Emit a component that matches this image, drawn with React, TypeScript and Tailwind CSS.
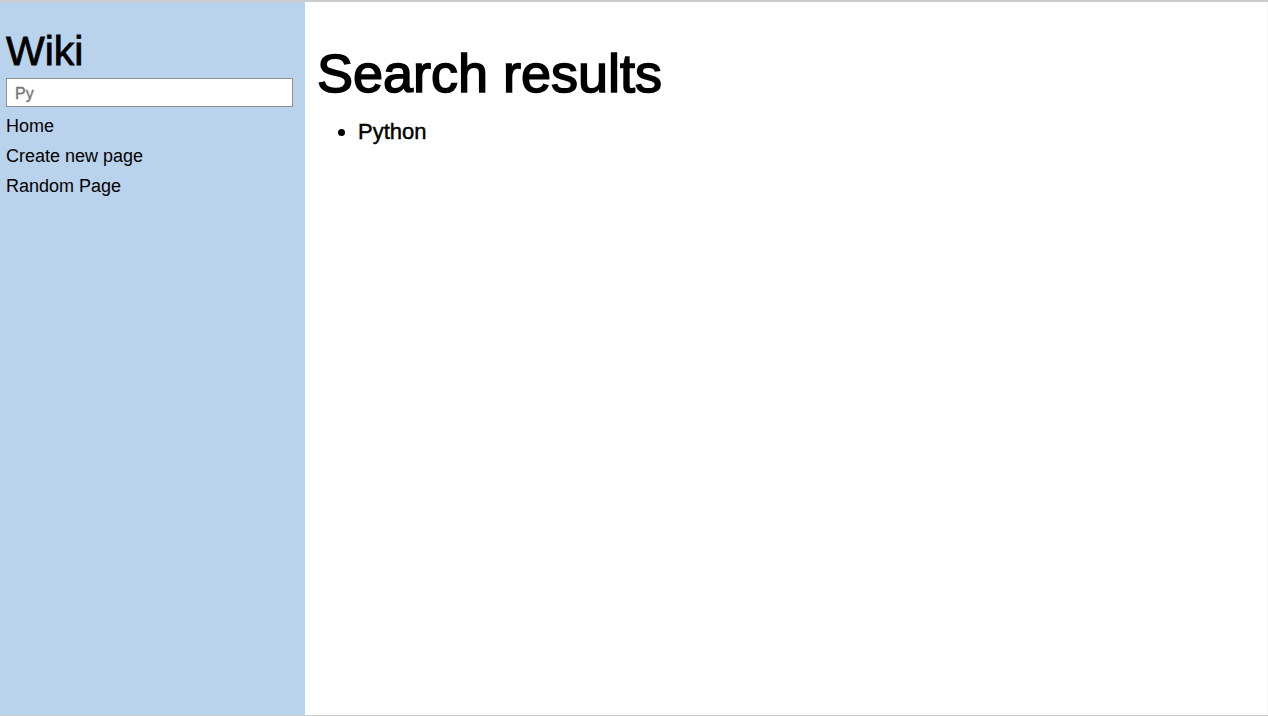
const links = ["Home", "Create new page", "Random Page"];

export default function App() {
  return (
    <div className="flex min-h-screen border-t-2 border-b border-[#cccccc] bg-white font-['Liberation_Sans',Arial,sans-serif] text-black">
      <nav className="w-[24.05%] shrink-0 bg-[#b9d3ed] pl-1.5 pr-3 pt-[27px]">
        <h2 className="text-[41px] leading-[44px] [-webkit-text-stroke:0.02em]">Wiki</h2>
        <form className="mt-[5px]" onSubmit={(e) => e.preventDefault()}>
          <input
            type="text"
            aria-label="Search"
            placeholder="Py"
            className="block h-[29px] w-full border border-[#8f8f8f] bg-white px-2 pt-0.5 text-base placeholder:text-[#757575] [-webkit-text-stroke:0.02em]"
          />
        </form>
        <ul className="mt-1 text-lg leading-[30px]">
          {links.map((label) => (
            <li key={label}>
              <a href="#">{label}</a>
            </li>
          ))}
        </ul>
      </nav>
      <main className="min-w-0 flex-1 border-r border-[#f6f6f6] px-3 pt-[41px]">
        <h1 className="text-[54px] leading-[60px] [-webkit-text-stroke:0.03em]">Search results</h1>
        <ul className="mt-[15px] list-disc pl-[41px] text-[22px] leading-7 [-webkit-text-stroke:0.02em]">
          <li>
            <a href="#">Python</a>
          </li>
        </ul>
      </main>
    </div>
  );
}
